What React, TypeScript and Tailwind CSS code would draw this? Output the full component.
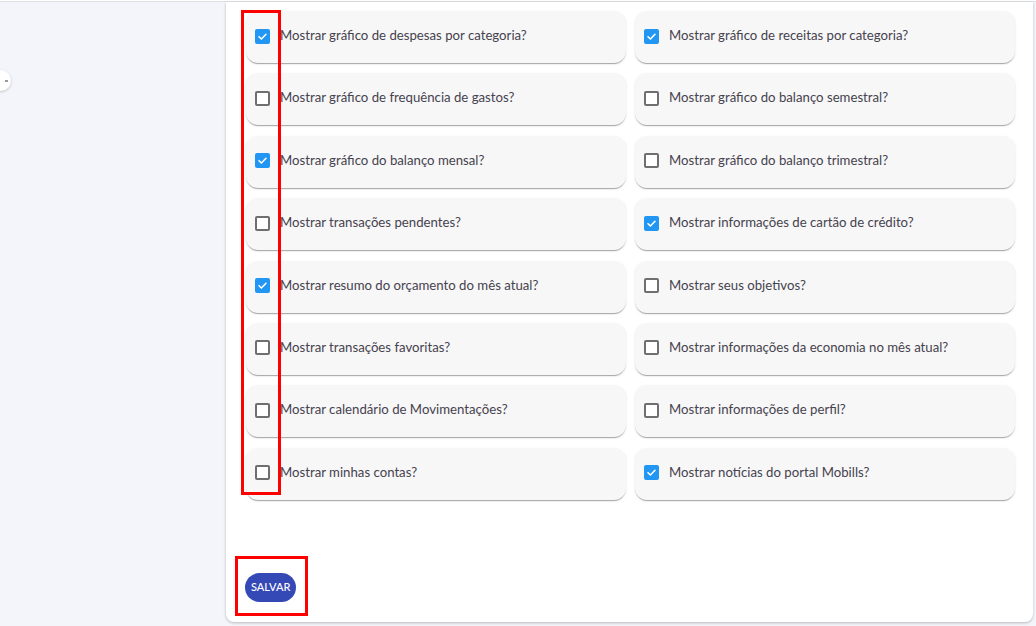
import React from "react"

const left = [
  { label: "Mostrar gráfico de despesas por categoria?", on: true },
  { label: "Mostrar gráfico de frequência de gastos?", on: false },
  { label: "Mostrar gráfico do balanço mensal?", on: true },
  { label: "Mostrar transações pendentes?", on: false },
  { label: "Mostrar resumo do orçamento do mês atual?", on: true },
  { label: "Mostrar transações favoritas?", on: false },
  { label: "Mostrar calendário de Movimentações?", on: false },
  { label: "Mostrar minhas contas?", on: false },
]

const right = [
  { label: "Mostrar gráfico de receitas por categoria?", on: true },
  { label: "Mostrar gráfico do balanço semestral?", on: false },
  { label: "Mostrar gráfico do balanço trimestral?", on: false },
  { label: "Mostrar informações de cartão de crédito?", on: true },
  { label: "Mostrar seus objetivos?", on: false },
  { label: "Mostrar informações da economia no mês atual?", on: false },
  { label: "Mostrar informações de perfil?", on: false },
  { label: "Mostrar notícias do portal Mobills?", on: true },
]

function Box({ on }: { on: boolean }) {
  if (on) {
    return (
      <span className="flex h-[15px] w-[15px] shrink-0 items-center justify-center rounded-[2px] bg-[#2196f3]">
        <svg width="11" height="11" viewBox="0 0 12 12" fill="none">
          <path d="M2.2 6.2l2.6 2.6 5-5.2" stroke="white" strokeWidth="1.7" strokeLinecap="round" strokeLinejoin="round" />
        </svg>
      </span>
    )
  }
  return <span className="h-[15px] w-[15px] shrink-0 rounded-[2px] border-2 border-[#6f6f6f] bg-white" />
}

function Option({ label, on }: { label: string; on: boolean }) {
  return (
    <label className="flex h-[52px] items-center gap-[10px] rounded-[12px] bg-[#f7f7f7] pb-[2px] pl-[9px] shadow-[0_2px_1px_-1px_rgba(0,0,0,0.22),0_1px_1px_0_rgba(0,0,0,0.12),0_1px_3px_0_rgba(0,0,0,0.08)]">
      <Box on={on} />
      <span className="text-[13.2px] text-[#46424e]">{label}</span>
    </label>
  )
}

export default function App() {
  const rows = left.map((l, i) => [l, right[i]])

  return (
    <div className="flex h-[626px] w-[1036px] flex-col overflow-hidden bg-[#f4f5fa] font-['Lato',sans-serif]">
      <div className="h-[2px] shrink-0 border-b border-[#dedfe3] bg-white" />
      <div className="flex flex-1">
        <aside className="relative w-[226px] shrink-0">
          <div className="absolute left-[-10px] top-[68px] flex h-[21px] w-[21px] items-center justify-end rounded-full bg-white pr-[3px] shadow-[0_1px_3px_rgba(0,0,0,0.2)]">
            <span className="h-[2px] w-[3px] bg-[#9a9a9a]" />
          </div>
        </aside>
        <main className="mb-[4px] mr-[3px] flex flex-1 flex-col rounded-b-[8px] bg-white pl-[20px] pr-[18px] pt-[9px] shadow-[0_1px_3px_rgba(0,0,0,0.25)]">
          <div className="relative">
            <div className="grid grid-cols-2 gap-x-[9px] gap-y-[10.4px]">
              {rows.map(([a, b], i) => (
                <React.Fragment key={i}>
                  <Option {...a} />
                  <Option {...b} />
                </React.Fragment>
              ))}
            </div>
            <div className="pointer-events-none absolute left-[-5px] top-[-1px] h-[485px] w-[40px] border-[3px] border-[#ff0000]" />
          </div>
          <div className="mt-[56px]">
            <div className="relative ml-[-11px] inline-flex h-[60px] w-[73px] items-center border-[3px] border-[#ff0000] pl-[7px] pt-[3px]">
              <button className="h-[29px] rounded-full bg-[#3449b5] px-[6px] text-[11px] font-medium text-white">
                SALVAR
              </button>
            </div>
          </div>
        </main>
      </div>
    </div>
  )
}
